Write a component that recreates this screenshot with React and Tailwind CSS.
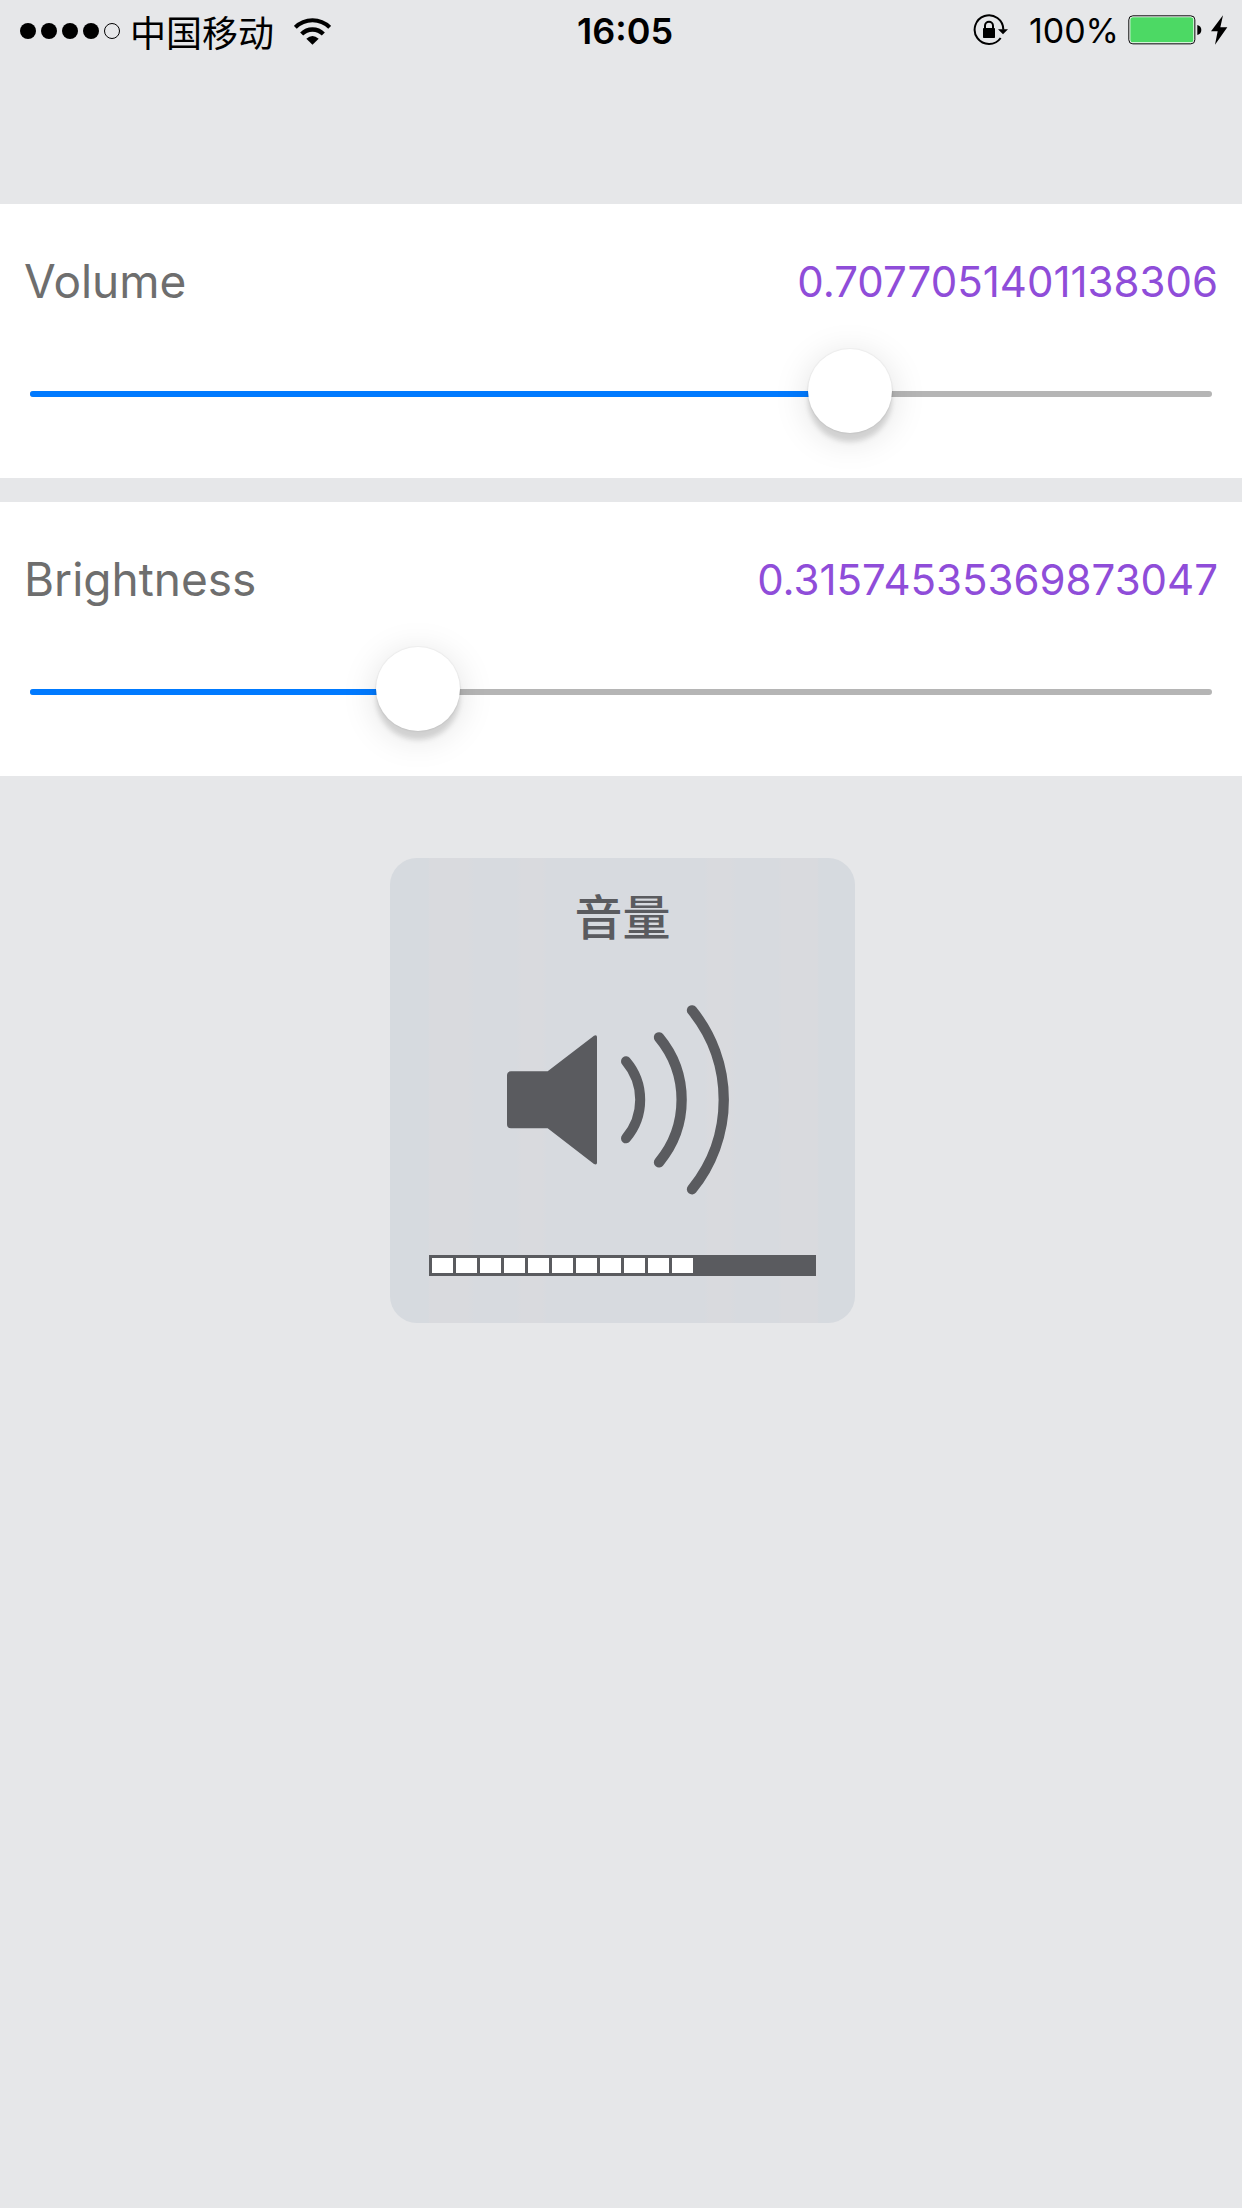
import { useState } from "react";

function SignalDots() {
  return (
    <div className="flex gap-[5px]" role="img" aria-label="Signal strength 4 of 5">
      {[1, 2, 3, 4].map((n) => (
        <span key={n} className="size-4 rounded-full bg-black" />
      ))}
      <span className="size-4 rounded-full border border-black" />
    </div>
  );
}

function WifiIcon() {
  return (
    <svg viewBox="882 46 111 84" className="h-7 w-[37px]" fill="none" stroke="#000" aria-hidden="true">
      <path d="M886 77 A73 73 0 0 1 989 77" strokeWidth="12" />
      <path d="M905 97 A46 46 0 0 1 970 97" strokeWidth="13" />
      <path d="M919 111 Q937.500 95 956 111 L937.500 129 Z" fill="#000" stroke="none" />
    </svg>
  );
}

function RotationLockIcon() {
  return (
    <svg viewBox="69 42 108 96" className="h-8 w-9" fill="none" stroke="#000" aria-hidden="true">
      <path d="M160 89 A43 43 0 1 0 152 114" strokeWidth="6" />
      <path d="M144 88 H174 L159 103 Z" fill="#000" stroke="none" />
      <rect x="99" y="84" width="36" height="30" rx="2" fill="#000" stroke="none" />
      <path d="M105 86 V77 A12 12 0 0 1 129 77 V86" strokeWidth="6" />
    </svg>
  );
}

function BatteryIcon() {
  return (
    <svg viewBox="533 47 222 90" className="h-[30px] w-[74px]" aria-hidden="true">
      <rect x="535.500" y="49.500" width="198" height="84" rx="12" fill="#fff" stroke="#000" strokeWidth="3" />
      <rect x="540" y="54" width="189" height="75" rx="8" fill="#4cd964" />
      <path d="M741 77 Q753 80 753 92 T741 107 Z" fill="#000" />
    </svg>
  );
}

function BoltIcon() {
  return (
    <svg viewBox="782 45 57 90" className="h-[30px] w-[19px]" aria-hidden="true">
      <path d="M818 46 L782 94 H802 L794 134 L831 82 H810 Z" fill="#000" />
    </svg>
  );
}

function StatusBar() {
  return (
    <header className="grid h-[61px] grid-cols-[1fr_auto_1fr] items-center pr-3 pl-5 text-4xl text-black">
      <div className="flex items-center">
        <SignalDots />
        <span className="ml-2.5 font-['Noto_Sans_CJK_SC',sans-serif] leading-[58px]">中国移动</span>
        <span className="ml-5">
          <WifiIcon />
        </span>
      </div>
      <time className="font-semibold">16:05</time>
      <div className="flex items-center justify-end">
        <RotationLockIcon />
        <span className="ml-5 text-[34px]">100%</span>
        <span className="ml-[9px]">
          <BatteryIcon />
        </span>
        <span className="ml-[9px]">
          <BoltIcon />
        </span>
      </div>
    </header>
  );
}

function SliderCard({ id, label, value, onChange }) {
  return (
    <section className="bg-white px-6 pt-12 pb-[39px]">
      <div className="flex h-[58px] items-center justify-between">
        <label htmlFor={id} className="text-[46px] text-[#6e6e6e]">
          {label}
        </label>
        <output htmlFor={id} className="text-[42px] text-[#8f4dd9]">
          {String(value)}
        </output>
      </div>
      <div className="mx-[3px] mt-[39px] grid h-[90px]">
        <div className="col-start-1 row-start-1 mx-[3px] h-1.5 self-center overflow-hidden rounded-full bg-[#b5b5b5]">
          <div className="h-full bg-[#007aff]" style={{ width: `calc(39px + (100% - 78px) * ${value})` }} />
        </div>
        <input
          id={id}
          type="range"
          min="0"
          max="1"
          step="any"
          value={value}
          onChange={(e) => onChange(Number(e.target.value))}
          className="z-10 col-start-1 row-start-1 h-[84px] w-full cursor-pointer appearance-none self-start bg-transparent outline-none [&::-webkit-slider-thumb]:size-[84px] [&::-webkit-slider-thumb]:appearance-none [&::-webkit-slider-thumb]:rounded-full [&::-webkit-slider-thumb]:bg-white [&::-webkit-slider-thumb]:shadow-[0_0_1px_1px_rgba(0,0,0,0.04),0_9px_5px_rgba(0,0,0,0.13),0_6px_36px_rgba(0,0,0,0.13)]"
        />
      </div>
    </section>
  );
}

function SpeakerIcon() {
  return (
    <svg viewBox="381 464 666 570" className="h-[190px] w-[222px]" fill="none" stroke="#5a5b5f" strokeLinecap="round" aria-hidden="true">
      <path
        d="M393 663 H503 L642 556 Q651 552 651 560 V937 Q651 945 642 941 L503 834 H393 Q381 834 381 822 V675 Q381 663 393 663 Z"
        fill="#5a5b5f"
        stroke="none"
      />
      <path d="M738 633 A178 178 0 0 1 738 864" strokeWidth="30" />
      <path d="M837 561 A293 293 0 0 1 837 936" strokeWidth="31" />
      <path d="M936 480 A426 426 0 0 1 936 1017" strokeWidth="31" />
    </svg>
  );
}

function VolumeHud({ level }) {
  const filled = Math.round(level * 16);
  return (
    <aside className="w-[465px] rounded-[27px] bg-[#d7dade] bg-[linear-gradient(90deg,#d6dadf_38px,#d9dade_40px,#d9dade_78px,#d7dadf_84px,#d7dadf_126px,#d9dade_132px,#d9dade_152px,#d7dadf_157px,#d7dadf_314px,#d9dade_320px,#d9dade_340px,#d7dadf_346px,#d7dadf_388px,#d9dade_392px,#d9dade_427px,#d6dadf_429px)] px-[39px] pt-[26px] pb-[47px]">
      <h2 className="text-center font-['Noto_Sans_CJK_SC',sans-serif] text-5xl leading-[60px] font-medium text-[#5a5b5f]">音量</h2>
      <div className="mt-[61px] flex justify-center pr-[9px]">
        <SpeakerIcon />
      </div>
      <div className="mt-[60px] flex gap-[3px] bg-[#5a5b5f] p-[3px]">
        {Array.from({ length: 16 }, (_, i) => (
          <span key={i} className={i < filled ? "h-[15px] flex-1 bg-white" : "h-[15px] flex-1"} />
        ))}
      </div>
    </aside>
  );
}

export default function App() {
  const [volume, setVolume] = useState(0.7077051401138306);
  const [brightness, setBrightness] = useState(0.31574535369873047);
  return (
    <div className="min-h-screen bg-[#e6e7e9] font-['Inter','Noto_Sans_CJK_SC',sans-serif]">
      <StatusBar />
      <main className="pt-[143px]">
        <div className="flex flex-col gap-6">
          <SliderCard id="volume" label="Volume" value={volume} onChange={setVolume} />
          <SliderCard id="brightness" label="Brightness" value={brightness} onChange={setBrightness} />
        </div>
        <div className="mt-[82px] flex justify-center pl-[3px]">
          <VolumeHud level={volume} />
        </div>
      </main>
    </div>
  );
}
